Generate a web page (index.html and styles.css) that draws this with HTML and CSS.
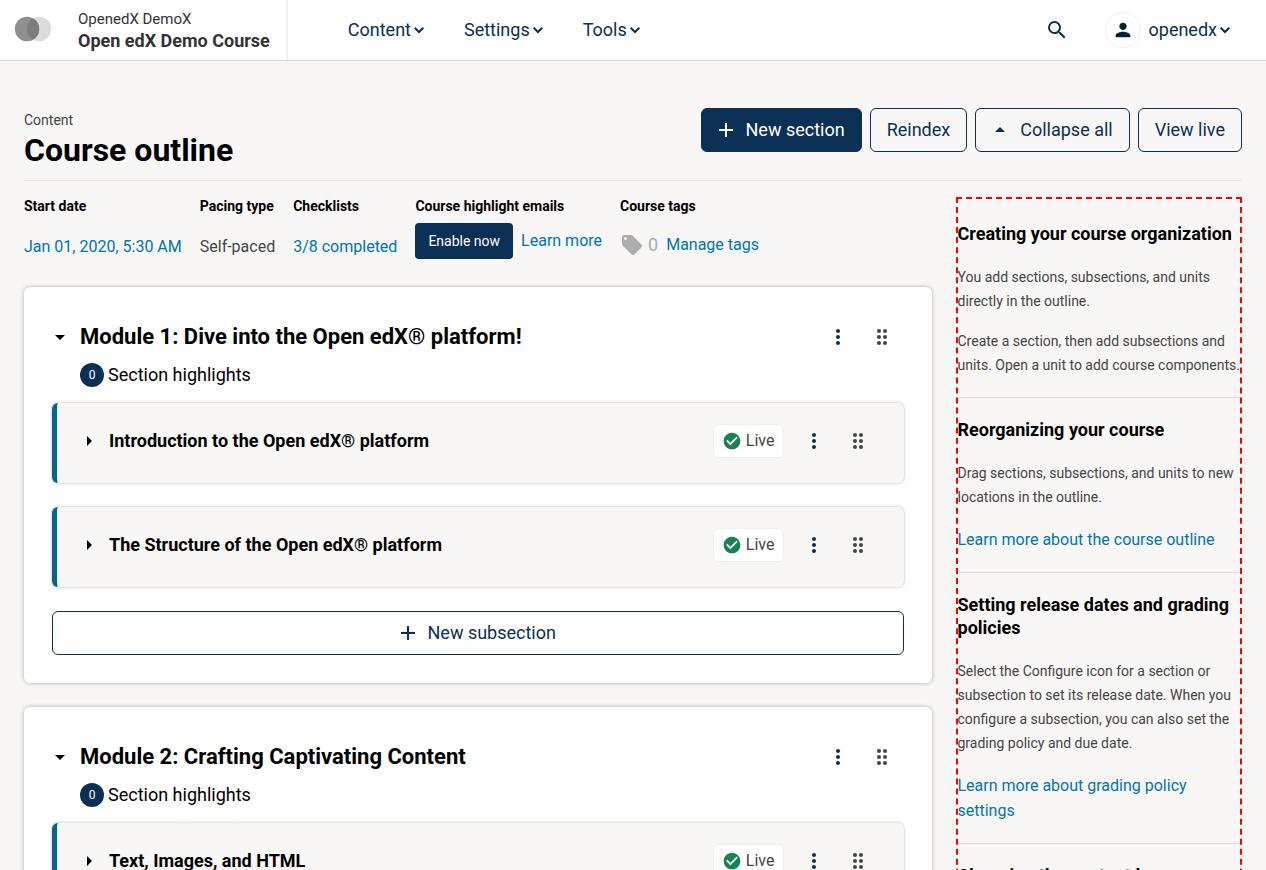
FILE: index.html
```html
<!DOCTYPE html>
<html lang="en">
<head>
<meta charset="utf-8">
<meta name="viewport" content="width=device-width, initial-scale=1">
<title>Course outline | Open edX Demo Course</title>
<link rel="stylesheet" href="styles.css">
</head>
<body>
<svg class="sprite" aria-hidden="true">
  <symbol id="chevron" viewBox="0 0 12 12"><path d="M1.7 3.7 6 8l4.3-4.3" fill="none" stroke="currentColor" stroke-width="2"/></symbol>
  <symbol id="plus" viewBox="0 0 24 24"><path d="M19 13h-6v6h-2v-6H5v-2h6V5h2v6h6z"/></symbol>
  <symbol id="caret-up" viewBox="0 0 24 24"><path d="m7 14 5-5 5 5z"/></symbol>
  <symbol id="caret-down" viewBox="0 0 24 24"><path d="m7 10 5 5 5-5z"/></symbol>
  <symbol id="caret-right" viewBox="0 0 24 24"><path d="m10 17 5-5-5-5z"/></symbol>
  <symbol id="more" viewBox="0 0 24 24"><path d="M12 8c1.100 0 2-.9 2-2s-.9-2-2-2-2 .9-2 2 .9 2 2 2zm0 2c-1.100 0-2 .9-2 2s.9 2 2 2 2-.9 2-2-.9-2-2-2zm0 6c-1.100 0-2 .9-2 2s.9 2 2 2 2-.9 2-2-.9-2-2-2z"/></symbol>
  <symbol id="drag" viewBox="0 0 24 24"><circle cx="9" cy="6" r="2"/><circle cx="15" cy="6" r="2"/><circle cx="9" cy="12" r="2"/><circle cx="15" cy="12" r="2"/><circle cx="9" cy="18" r="2"/><circle cx="15" cy="18" r="2"/></symbol>
  <symbol id="check" viewBox="0 0 24 24"><path d="M12 2C6.480 2 2 6.480 2 12s4.480 10 10 10 10-4.480 10-10S17.520 2 12 2zm-2 15-5-5 1.410-1.410L10 14.170l7.590-7.590L19 8l-9 9z"/></symbol>
</svg>
<div class="app">
  <header class="header">
    <a class="logo" href="#" aria-label="Home">
      <svg width="38" height="26" viewBox="0 0 38 26"><circle cx="25" cy="13" r="12.200" fill="#dbdbdb"/><circle cx="13" cy="13" r="12.200" fill="#8f8f8f"/><path d="M19 2.380a12.200 12.200 0 0 1 0 21.240a12.200 12.200 0 0 1 0-21.240z" fill="#7d7d7d"/></svg>
    </a>
    <a class="course" href="#">
      <span class="course-org">OpenedX DemoX</span>
      <span class="course-name">Open edX Demo Course</span>
    </a>
    <nav class="nav">
      <button type="button" class="menu">Content<svg class="chevron"><use href="#chevron"/></svg></button>
      <button type="button" class="menu">Settings<svg class="chevron"><use href="#chevron"/></svg></button>
      <button type="button" class="menu">Tools<svg class="chevron"><use href="#chevron"/></svg></button>
    </nav>
    <div class="account">
      <button type="button" class="icon-button" aria-label="Search"><svg class="icon" viewBox="0 0 24 24"><path d="M15.500 14h-.79l-.28-.27A6.471 6.471 0 0 0 16 9.500 6.500 6.500 0 1 0 9.500 16c1.610 0 3.090-.59 4.230-1.570l.27.28v.79l5 4.990L20.490 19l-4.990-5zm-6 0C7.010 14 5 11.990 5 9.500S7.010 5 9.500 5 14 7.010 14 9.500 11.990 14 9.500 14z"/></svg></button>
      <button type="button" class="menu user"><span class="avatar"><svg class="icon" viewBox="0 0 24 24"><path d="M12 12c2.210 0 4-1.790 4-4s-1.790-4-4-4-4 1.790-4 4 1.790 4 4 4zm0 2c-2.670 0-8 1.340-8 4v2h16v-2c0-2.660-5.330-4-8-4z"/></svg></span>openedx<svg class="chevron"><use href="#chevron"/></svg></button>
    </div>
  </header>

  <main class="page">
    <div class="title-bar">
      <div>
        <div class="eyebrow">Content</div>
        <h1 class="title">Course outline</h1>
      </div>
      <div class="actions">
        <button type="button" class="btn btn-primary"><svg class="icon"><use href="#plus"/></svg>New section</button>
        <button type="button" class="btn">Reindex</button>
        <button type="button" class="btn"><svg class="icon"><use href="#caret-up"/></svg>Collapse all</button>
        <a class="btn" href="#">View live</a>
      </div>
    </div>

    <div class="layout">
      <div class="outline">
        <div class="status">
          <div><h2 class="status-label">Start date</h2><div class="status-value"><a href="#">Jan 01, 2020, 5:30 AM</a></div></div>
          <div><h2 class="status-label">Pacing type</h2><div class="status-value">Self-paced</div></div>
          <div><h2 class="status-label">Checklists</h2><div class="status-value"><a href="#">3/8 completed</a></div></div>
          <div><h2 class="status-label">Course highlight emails</h2><div class="status-emails"><button type="button" class="btn-small">Enable now</button><a href="#">Learn more</a></div></div>
          <div><h2 class="status-label">Course tags</h2><div class="status-tags"><svg class="tag" viewBox="0 0 24 24"><path d="M21.410 11.580l-9-9C12.050 2.220 11.550 2 11 2H4c-1.100 0-2 .9-2 2v7c0 .55.220 1.050.590 1.420l9 9c.36.360.860.580 1.410.580s1.050-.22 1.410-.59l7-7c.37-.36.590-.86.590-1.410s-.23-1.060-.59-1.420zM5.500 7C4.670 7 4 6.330 4 5.500S4.670 4 5.500 4 7 4.670 7 5.500 6.330 7 5.500 7z"/></svg><span class="tag-count">0</span><a href="#">Manage tags</a></div></div>
        </div>

        <section class="card">
          <div class="row">
            <button type="button" class="toggle toggle-section"><svg class="icon"><use href="#caret-down"/></svg>Module 1: Dive into the Open edX® platform!</button>
            <button type="button" class="action" aria-label="More actions"><svg class="icon"><use href="#more"/></svg></button>
            <button type="button" class="action drag" aria-label="Drag to reorder"><svg class="icon"><use href="#drag"/></svg></button>
          </div>
          <button type="button" class="highlights"><span class="count">0</span>Section highlights</button>
          <div class="subsections">
            <div class="subsection row">
              <button type="button" class="toggle"><svg class="icon"><use href="#caret-right"/></svg>Introduction to the Open edX® platform</button>
              <span class="live"><svg class="icon"><use href="#check"/></svg>Live</span>
              <button type="button" class="action" aria-label="More actions"><svg class="icon"><use href="#more"/></svg></button>
              <button type="button" class="action drag" aria-label="Drag to reorder"><svg class="icon"><use href="#drag"/></svg></button>
            </div>
            <div class="subsection row">
              <button type="button" class="toggle"><svg class="icon"><use href="#caret-right"/></svg>The Structure of the Open edX® platform</button>
              <span class="live"><svg class="icon"><use href="#check"/></svg>Live</span>
              <button type="button" class="action" aria-label="More actions"><svg class="icon"><use href="#more"/></svg></button>
              <button type="button" class="action drag" aria-label="Drag to reorder"><svg class="icon"><use href="#drag"/></svg></button>
            </div>
            <button type="button" class="btn btn-block"><svg class="icon"><use href="#plus"/></svg>New subsection</button>
          </div>
        </section>

        <section class="card">
          <div class="row">
            <button type="button" class="toggle toggle-section"><svg class="icon"><use href="#caret-down"/></svg>Module 2: Crafting Captivating Content</button>
            <button type="button" class="action" aria-label="More actions"><svg class="icon"><use href="#more"/></svg></button>
            <button type="button" class="action drag" aria-label="Drag to reorder"><svg class="icon"><use href="#drag"/></svg></button>
          </div>
          <button type="button" class="highlights"><span class="count">0</span>Section highlights</button>
          <div class="subsections">
            <div class="subsection row">
              <button type="button" class="toggle"><svg class="icon"><use href="#caret-right"/></svg>Text, Images, and HTML</button>
              <span class="live"><svg class="icon"><use href="#check"/></svg>Live</span>
              <button type="button" class="action" aria-label="More actions"><svg class="icon"><use href="#more"/></svg></button>
              <button type="button" class="action drag" aria-label="Drag to reorder"><svg class="icon"><use href="#drag"/></svg></button>
            </div>
          </div>
        </section>
      </div>

      <aside class="help">
        <section class="help-item">
          <h2>Creating your course organization</h2>
          <p>You add sections, subsections, and units directly in the outline.</p>
          <p>Create a section, then add subsections and units. Open a unit to add course components.</p>
        </section>
        <section class="help-item">
          <h2>Reorganizing your course</h2>
          <p>Drag sections, subsections, and units to new locations in the outline.</p>
          <a href="#">Learn more about the course outline</a>
        </section>
        <section class="help-item">
          <h2>Setting release dates and grading policies</h2>
          <p>Select the Configure icon for a section or subsection to set its release date. When you configure a subsection, you can also set the grading policy and due date.</p>
          <a href="#">Learn more about grading policy settings</a>
        </section>
        <section class="help-item">
          <h2>Changing the content learners see</h2>
        </section>
      </aside>
    </div>
  </main>
</div>
</body>
</html>
```
FILE: styles.css
```css
* { box-sizing: border-box; }

body {
  margin: 0;
  background: #f8f7f6;
  color: #454545;
  font: 18px/28px Roboto, "Liberation Sans", sans-serif;
}

a { color: #0075b4; text-decoration: none; }
button { margin: 0; padding: 0; border: 0; background: none; color: inherit; font: inherit; cursor: pointer; }
h1, h2, p { margin: 0; }

.sprite { display: none; }
.icon { flex: none; width: 24px; height: 24px; fill: currentColor; }

.app { display: flex; flex-direction: column; height: 100vh; }

/* Header */
.header {
  flex: none;
  display: flex;
  align-items: center;
  height: 61px;
  background: #fff;
  border-bottom: 1px solid #d7d7d7;
}
.logo { display: flex; margin-left: 14px; padding-bottom: 2px; }
.course {
  display: flex;
  flex-direction: column;
  align-self: stretch;
  justify-content: center;
  margin-left: 26px;
  padding: 2px 16px 0 0;
  border-right: 2px solid #f0f0f0;
  color: #333;
}
.course-org { font-size: 15px; line-height: 20px; }
.course-name { font-weight: 700; line-height: 24px; }
.nav { display: flex; gap: 39px; margin-left: 60px; }
.menu { display: flex; align-items: center; gap: 2px; color: #0a3055; }
.chevron { width: 12px; height: 12px; }
.account { display: flex; align-items: center; gap: 36px; margin-left: auto; padding-right: 35px; }
.icon-button { display: flex; color: #0a3055; }
.avatar {
  display: grid;
  place-items: center;
  width: 36px;
  height: 36px;
  margin-right: 6px;
  border: 1px solid #eee;
  border-radius: 50%;
  color: #00262b;
}
.avatar .icon { width: 22px; height: 22px; }

/* Page title and actions */
.page { flex: 1; min-height: 0; padding: 47px 24px 0; overflow-y: auto; scrollbar-width: none; }
.title-bar { display: flex; justify-content: space-between; padding-bottom: 12px; border-bottom: 1px solid #e7e6e5; }
.eyebrow { font-size: 14px; line-height: 24px; }
.title { color: #000; font-size: 32px; line-height: 36px; }
.actions { display: flex; align-items: flex-start; gap: 8px; }
.btn {
  display: flex;
  align-items: center;
  justify-content: center;
  gap: 8px;
  height: 44px;
  padding: 0 16px;
  border: 1px solid #0a3055;
  border-radius: 6px;
  color: #0a3055;
}
.btn .icon, .toggle .icon { margin-left: -4px; }
.btn-primary { background: #0a3055; color: #fff; }

.layout { display: grid; grid-template-columns: repeat(12, minmax(0, 1fr)); gap: 24px; padding-top: 16px; }
.outline { grid-column: span 9; }
.help { grid-column: span 3; }

/* Status row */
.status { display: flex; gap: 18px; margin-bottom: 28px; font-size: 16px; line-height: 24px; white-space: nowrap; }
.status-label { color: #000; font-size: 14px; line-height: 18px; }
.status-value { padding-top: 20px; }
.status-emails { display: flex; align-items: center; gap: 8px; padding-top: 8px; }
.status-tags { display: flex; align-items: center; padding-top: 18px; }
.tag { width: 24px; height: 24px; fill: #adadad; }
.tag-count { margin: 0 8px 0 4px; color: #adadad; font-size: 18px; }
.btn-small { height: 36px; padding: 0 13px; border-radius: 4px; background: #0a3055; color: #fff; font-size: 14px; }

/* Section cards */
.card {
  margin-bottom: 24px;
  padding: 28px;
  border-radius: 6px;
  background: #fff;
  box-shadow: 0 0 4px rgba(0, 0, 0, .3);
}
.row { display: flex; align-items: center; }
.toggle { display: flex; flex: 1; align-items: center; min-height: 44px; gap: 8px; color: #000; font-weight: 700; text-align: left; }
.toggle-section { font-size: 22px; }
.action { display: grid; place-items: center; width: 44px; height: 44px; color: #0a3055; }
.drag { color: #454545; }
.highlights { display: flex; align-items: center; gap: 4px; margin: 2px 0 14px 28px; color: #000; }
.count {
  display: grid;
  place-items: center;
  width: 24px;
  height: 24px;
  border-radius: 50%;
  background: #0a3055;
  color: #fff;
  font-size: 12px;
  line-height: 24px;
}
.subsections { display: grid; gap: 24px; }
.subsection {
  min-height: 80px;
  padding: 0 24px 4px;
  border-left: 5px solid #00688d;
  border-radius: 6px;
  background: #f8f7f6;
  box-shadow: 0 0 3px rgba(0, 0, 0, .3);
}
.live {
  display: flex;
  align-items: center;
  gap: 4px;
  height: 34px;
  margin-right: 8px;
  padding: 0 8px;
  border: 1px solid #f0efee;
  border-radius: 6px;
  background: #fff;
  font-size: 16px;
}
.live .icon { width: 20px; height: 20px; fill: #178253; }
.btn-block { width: 100%; }

/* Help sidebar */
.help { border: 2px dashed #f00; padding-top: 3px; }
.help-item { padding: 20px 0; }
.help-item + .help-item { border-top: 1px solid #dfdedd; }
.help h2 { margin-bottom: 20px; color: #000; font-size: 18px; line-height: 23px; }
.help p { font-size: 14px; line-height: 24px; }
.help p + p { margin-top: 16px; }
.help a { display: block; margin-top: 18px; font-size: 16px; line-height: 25px; }
```
